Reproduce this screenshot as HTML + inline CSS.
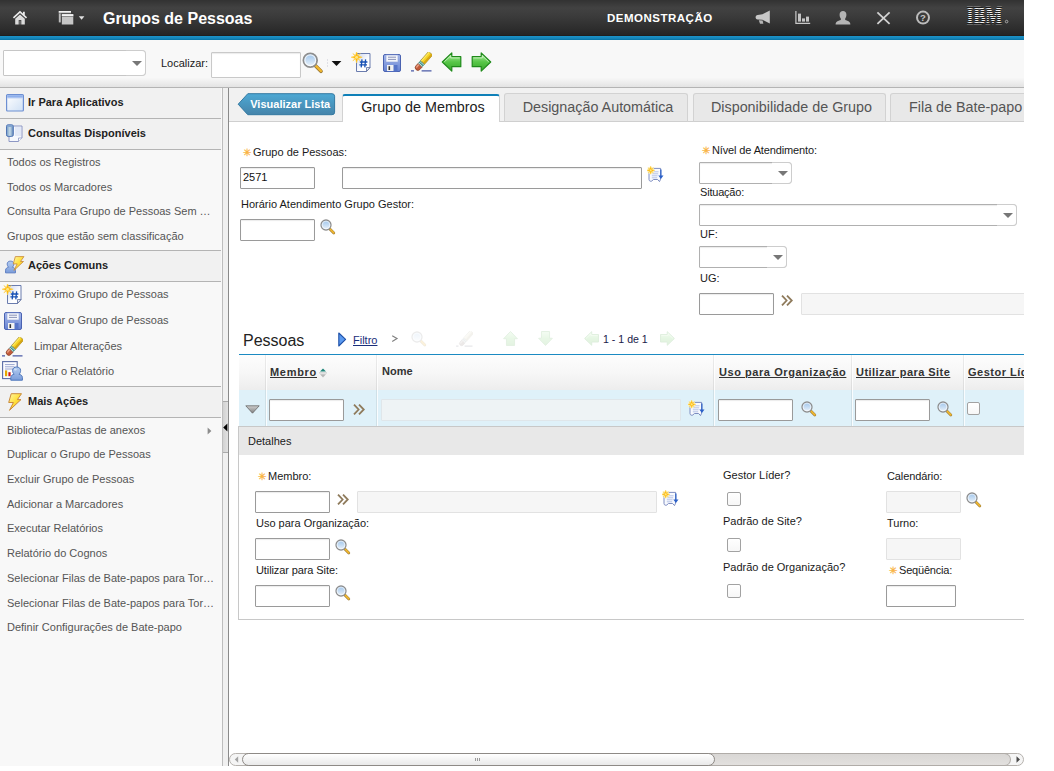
<!DOCTYPE html>
<html lang="pt-BR">
<head>
<meta charset="utf-8">
<title>Grupos de Pessoas</title>
<style>
html,body{margin:0;padding:0;background:#fff;}
body{width:1054px;height:771px;overflow:hidden;position:relative;font-family:"Liberation Sans",Arial,sans-serif;font-size:11px;color:#222;}
#app{position:absolute;left:0;top:0;width:1024px;height:766px;overflow:hidden;background:#fff;}
.abs,.ic{position:absolute;}
svg{display:block;overflow:visible;}
#hdr{position:absolute;left:0;top:0;width:1024px;height:36px;background:linear-gradient(#323232 0,#424242 22%,#3b3b3b 45%,#2d2d2d 80%,#252525 96%,#1c1c1c 100%);}
#hdrline{position:absolute;left:0;top:36px;width:1024px;height:4px;background:linear-gradient(#1c93c9,#1585b9 60%,#0672a3);}
#title{position:absolute;left:103px;top:9px;font-size:16px;font-weight:bold;color:#fff;white-space:nowrap;line-height:20px;}
#demo{position:absolute;left:607px;top:11px;font-size:11.5px;font-weight:bold;color:#fff;line-height:14px;white-space:nowrap;letter-spacing:.5px;}
#tb{position:absolute;left:0;top:40px;width:1024px;height:47px;background:linear-gradient(#f8f8f8 0,#f8f8f8 80%,#e3e3e3 100%);border-bottom:1px solid #b4b4b4;}
.inp{position:absolute;box-sizing:border-box;border:1px solid #9a9a9a;background:#fff;height:22px;border-radius:1px;font-size:11px;line-height:18px;padding-left:2px;color:#111;box-shadow:inset 0 1px 1px rgba(0,0,0,.08);}
.ro{background:#f6f6f6;border-color:#e2e2e2;box-shadow:none;}
.sel{border-color:#b0b0b0;border-radius:1px 4px 4px 1px;}
.sel:before{content:"";position:absolute;right:-1px;top:-1px;bottom:-1px;width:19px;border:1px solid #cdcdcd;border-left:none;border-radius:0 4px 4px 0;background:#fff;}
.sel:after{content:"";position:absolute;right:3px;top:8px;border-left:5px solid transparent;border-right:5px solid transparent;border-top:5px solid #777;}
.sel.tbs{border-color:#c6c6c6;border-radius:1px 4px 4px 1px;box-shadow:none;}
.sel.tbs:after{right:3px;top:10px;border-left-width:5px;border-right-width:5px;border-top-width:5.5px;}
.lbl{position:absolute;white-space:nowrap;font-size:11px;line-height:13px;color:#1a1a1a;}
.req{color:#f9b548;font-size:10px;display:inline-block;width:10px;font-weight:bold;}
.cb{position:absolute;box-sizing:border-box;width:14px;height:14px;border:1px solid #a2a2a2;border-radius:2px;background:linear-gradient(#fff,#f7f7f7);}
#nav{position:absolute;left:0;top:87px;width:222px;height:679px;background:#f8f8f8;border-top:1px solid #b4b4b4;box-sizing:border-box;}
.nh{position:absolute;left:0;width:221px;box-sizing:border-box;border-bottom:1px solid #b4b4b4;background:#f1f1f1;font-weight:bold;font-size:11px;color:#222;padding-left:28px;white-space:nowrap;}
.ni{position:absolute;left:7px;font-size:11px;color:#555;white-space:nowrap;line-height:14px;}
#split{position:absolute;left:222px;top:88px;width:7px;height:678px;background:#f0f0f0;border-left:1px solid #bdbdbd;border-right:1px solid #8a8a8a;box-sizing:border-box;}
#splith{position:absolute;left:223px;top:401px;width:5px;height:52px;box-sizing:border-box;background:linear-gradient(90deg,#d2d2d2,#e2e2e2);border-top:1px solid #aaa;border-bottom:1px solid #aaa;}
#tabbar{position:absolute;left:229px;top:87px;width:795px;height:35px;background:#f1f1f1;border-bottom:1px solid #cfcfcf;border-top:1px solid #b4b4b4;box-sizing:border-box;}
.tab{position:absolute;top:93px;height:29px;box-sizing:border-box;border:1px solid #d2d2d2;border-bottom:1px solid #cfcfcf;background:#e8e8e8;font-size:14.35px;color:#555;line-height:26px;text-align:center;padding-left:4px;white-space:nowrap;border-radius:3px 3px 0 0;}
.tab.on{top:94px;height:28px;background:#fff;border-top:2px solid #0f80b8;border-bottom:none;color:#222;line-height:23px;}
.th{position:absolute;font-weight:bold;font-size:11px;color:#333;white-space:nowrap;line-height:13px;letter-spacing:.5px;}
.th.u{text-decoration:underline;}
.vsep{position:absolute;top:355px;width:1px;height:71px;background:rgba(0,0,0,.07);box-shadow:1px 0 0 rgba(255,255,255,.8);}
</style>
</head>
<body>
<div id="app">
<svg width="0" height="0" style="position:absolute">
<defs>
<linearGradient id="gLens" x1="0" y1="0" x2="0" y2="1"><stop offset="0" stop-color="#9cc3ea"/><stop offset="1" stop-color="#eef5fc"/></linearGradient>
<linearGradient id="gGreen" x1="0" y1="0" x2="0" y2="1"><stop offset="0" stop-color="#b4eea8"/><stop offset=".5" stop-color="#58c648"/><stop offset="1" stop-color="#36a62a"/></linearGradient>
<linearGradient id="gWin" x1="0" y1="0" x2="1" y2="1"><stop offset="0" stop-color="#ffffff"/><stop offset="1" stop-color="#cfe0f5"/></linearGradient>
<linearGradient id="gSave" x1="0" y1="0" x2="0" y2="1"><stop offset="0" stop-color="#a6b9ec"/><stop offset="1" stop-color="#6783d2"/></linearGradient>
<linearGradient id="gBolt" x1="0" y1="0" x2="1" y2="1"><stop offset="0" stop-color="#fff7a8"/><stop offset=".5" stop-color="#ffdf3a"/><stop offset="1" stop-color="#f0b21c"/></linearGradient>
<linearGradient id="gPers" x1="0" y1="0" x2="0" y2="1"><stop offset="0" stop-color="#b4ccf0"/><stop offset="1" stop-color="#7a9cda"/></linearGradient>
<linearGradient id="gPage" x1="0" y1="0" x2="1" y2="1"><stop offset="0" stop-color="#c9d4ee"/><stop offset=".6" stop-color="#ffffff"/></linearGradient>
<linearGradient id="gCyl" x1="0" y1="0" x2="1" y2="0"><stop offset="0" stop-color="#6f97c4"/><stop offset=".5" stop-color="#c6dbe8"/><stop offset="1" stop-color="#5f86b8"/></linearGradient>

<symbol id="i-mag" viewBox="0 0 16 16">
<line x1="9.8" y1="10" x2="13.8" y2="14" stroke="#9a7a38" stroke-width="2.7" stroke-linecap="round"/>
<line x1="10" y1="10" x2="13.8" y2="13.8" stroke="#f3b92e" stroke-width="1.7" stroke-linecap="round"/>
<circle cx="6" cy="6" r="5" fill="url(#gLens)" stroke="#8e8e8e" stroke-width="1.3"/>
<circle cx="6" cy="6" r="3.9" fill="none" stroke="#fff" stroke-opacity=".75" stroke-width=".8"/>
</symbol>

<symbol id="i-chev" viewBox="0 0 12 11">
<path d="M1 .6 L5.6 5.5 L1 10.4 M6 .6 L10.8 5.5 L6 10.4" fill="none" stroke="#8f7b5c" stroke-width="1.8"/>
</symbol>

<symbol id="i-star" viewBox="-5 -5 10 10">
<path d="M0-5 L1-1.4 L3.2-3.2 L1.4-1 L5 0 L1.4 1 L3.2 3.2 L1 1.4 L0 5 L-1 1.4 L-3.2 3.2 L-1.4 1 L-5 0 L-1.4-1 L-3.2-3.2 L-1-1.4Z" fill="#ffb400" stroke="#ffd34d" stroke-width=".5"/>
<circle r="1.3" fill="#ffe680"/>
</symbol>

<symbol id="i-detail" viewBox="0 0 17 16">
<path d="M2 2.4 H13.6 V13.2 L12.5 15.6 L10.6 13.5 H6.4 Q4.8 15.8 3.2 15.2 Q2 14.8 2 13.4Z" fill="#f8fafe" stroke="#7081ba" stroke-width=".9" stroke-linejoin="round"/>
<path d="M4.8 5.8H11.6M4.8 7.8H11.2M4.8 9.8H10.6M4.8 11.8H10.2" stroke="#b6c2e6" stroke-width="1"/>
<path d="M13.9 3.6 V10.6" stroke="#2b60c8" stroke-width="1.2"/>
<path d="M11.3 9.5 H16.5 L13.9 12.9Z" fill="#2b60c8"/>
<circle cx="3.7" cy="4.3" r="3.6" fill="#fff6c4" opacity=".8"/>
<use href="#i-star" x="-.5" y="0.1" width="8.4" height="8.4"/>
</symbol>

<symbol id="i-new" viewBox="0 0 20 20">
<path d="M5.5 1.5 H19 V15.5 L15.5 19.5 H5.5Z" fill="url(#gPage)" stroke="#6a7cae" stroke-width="1"/>
<path d="M19 15.5 H15.5 V19.5Z" fill="#eef1f8" stroke="#5a6c9c" stroke-width=".8"/>
<path d="M11 7.4 L10.2 15.4 M14.6 7.4 L13.8 15.4 M8.8 10 H16.4 M8.4 12.9 H16" stroke="#1650b4" stroke-width="1.3" fill="none"/>
<use href="#i-star" x="-.2" y="-.6" width="11.6" height="11.6"/>
</symbol>

<symbol id="i-save" viewBox="0 0 18 18">
<rect x=".5" y=".5" width="17" height="17" rx="1.5" fill="url(#gSave)" stroke="#4a62b0"/>
<rect x="3" y="1" width="12" height="7" fill="#f4f6fb" stroke="#8ea0d8" stroke-width=".6"/>
<path d="M5 3.2H13M5 5.4H13" stroke="#8a93b8" stroke-width="1"/>
<rect x="4" y="11" width="10.5" height="6.5" fill="#5674c8"/>
<rect x="4" y="11" width="6.5" height="6" fill="#f2f2f2"/>
<rect x="5.5" y="12.2" width="1.6" height="3.8" fill="#333"/>
</symbol>

<symbol id="i-erase" viewBox="0 0 21 20">
<g transform="translate(5.2 17.6) rotate(-48.5)">
<path d="M6 -2.7 H2.6 A2.7 2.7 0 0 0 2.6 2.7 H6Z" fill="#c25a3a" stroke="#7e3a22" stroke-width=".6"/>
<path d="M5.6 -2.1 H2.8 A2 2 0 0 0 1.2 -.6 H5.6Z" fill="#eaa284"/>
<rect x="6" y="-2.7" width="3.8" height="5.4" fill="#e4efea" stroke="#4e7e78" stroke-width=".5"/>
<rect x="7" y="-2.7" width="1.1" height="5.4" fill="#2c8c82"/>
<rect x="8.7" y="-2.7" width=".7" height="5.4" fill="#2c8c82"/>
<rect x="9.8" y="-2.7" width="12" height="5.4" fill="#f6d424" stroke="#8a7420" stroke-width=".6"/>
<rect x="9.8" y=".6" width="12" height="2.1" fill="#d6a616"/>
<rect x="9.8" y="-2.3" width="12" height="1.1" fill="#fbe96a"/>
</g>
<path d="M0 18.9 H3 M10.6 18.9 H20.5" stroke="#4a5aa6" stroke-width="1.4"/>
</symbol>

<symbol id="i-left" viewBox="0 0 20 20">
<path d="M.8 10 L10.3 .9 V4.7 H19.3 V14.7 H10.3 V19.1Z" fill="url(#gGreen)" stroke="#1f8a1a" stroke-width="1.2" stroke-linejoin="round"/>
<path d="M2.8 9.8 L9.2 3.8 V5.9 H18.2" fill="none" stroke="#d4f6cc" stroke-opacity=".8" stroke-width="1"/>
</symbol>
<symbol id="i-right" viewBox="0 0 20 20">
<path d="M19.2 10 L9.7 .9 V4.7 H.7 V14.7 H9.7 V19.1Z" fill="url(#gGreen)" stroke="#1f8a1a" stroke-width="1.2" stroke-linejoin="round"/>
<path d="M1.8 5.9 H10.8 V3.8 L17.2 9.8" fill="none" stroke="#d4f6cc" stroke-opacity=".8" stroke-width="1"/>
</symbol>

<symbol id="i-win" viewBox="0 0 18 18">
<rect x=".6" y=".6" width="16.8" height="16.4" rx="1" fill="url(#gWin)" stroke="#6d8fd2" stroke-width="1.2"/>
<rect x="1.2" y="1.2" width="15.6" height="2.6" fill="#8fb0ec"/>
<path d="M1.2 4.2H16.8" stroke="#c5d6f4" stroke-width=".8"/>
</symbol>

<symbol id="i-query" viewBox="0 0 17 19">
<path d="M4 2 H16 V14 L12.5 17.5 H3 V12" fill="#f6f8fd" stroke="#8d97c4" stroke-width="1"/>
<path d="M16 14 H12.5 V17.5" fill="#fff" stroke="#8d97c4" stroke-width=".8"/>
<path d="M9 3 H15 V12 H9Z" fill="#dfe5f5" opacity=".8"/>
<rect x=".5" y=".8" width="6.8" height="11.6" rx="1.6" fill="url(#gCyl)" stroke="#4f74b4" stroke-width="1"/>
<ellipse cx="3.9" cy="2" rx="3" ry="1" fill="#7fa2d0"/>
</symbol>

<symbol id="i-bolt" viewBox="0 0 14 18">
<path d="M3.2 .7 H13.5 L9.4 6.6 H13 L1.5 17.3 L5.4 9.5 H.7Z" fill="url(#gBolt)" stroke="#c98a3c" stroke-width="1" stroke-linejoin="round"/>
</symbol>

<symbol id="i-person" viewBox="0 0 12 14">
<path d="M.6 13.4 V10.6 C.6 8.4 2.4 7.6 4 7.2 C2.8 6.2 2.4 5 2.4 3.6 C2.4 1.6 4 .6 6 .6 C8 .6 9.6 1.6 9.6 3.6 C9.6 5 9.2 6.2 8 7.2 C9.6 7.6 11.4 8.4 11.4 10.6 V13.4Z" fill="url(#gPers)" stroke="#5678c0" stroke-width="1" stroke-linejoin="round"/>
</symbol>

<symbol id="i-report" viewBox="0 0 21 20">
<rect x=".6" y=".6" width="14.6" height="17" fill="#fbfbfe" stroke="#5a6ca6" stroke-width="1.1"/>
<path d="M3 3.6H12.6M3 5.8H12.6M3 8H12.6" stroke="#9aa6d0" stroke-width="1"/>
<rect x="3" y="9.4" width="2.2" height="5.8" fill="#e6a800"/>
<rect x="6.4" y="11.2" width="2.2" height="4" fill="#d01818"/>
<path d="M8.8 19.2 V16.6 C8.8 14.4 10.6 13.6 12.2 13.2 C11 12.2 10.6 11 10.6 9.4 C10.6 7.2 12.4 6 14.6 6 C16.8 6 18.6 7.2 18.6 9.4 C18.6 11 18.2 12.2 17 13.2 C18.6 13.6 20.4 14.4 20.4 16.6 V19.2Z" fill="url(#gPers)" stroke="#4f78bc" stroke-width="1" stroke-linejoin="round"/>
<ellipse cx="13.4" cy="8.6" rx="1.4" ry="1" fill="#dbe8fa" opacity=".8"/>
</symbol>
</defs>
</svg>
<div id="hdr"></div>
<div id="hdrline"></div>
<!-- home -->
<svg class="ic" style="left:12px;top:10px" width="16" height="15" viewBox="0 0 16 15">
<path d="M8 .7 L.9 7.3 L2 8.4 L8 2.9 L14 8.4 L15.1 7.3 L12.8 5.2 V1.8 H11 V3.5Z" fill="#ebebeb"/>
<path d="M3.2 8.7 L8 4.4 L12.8 8.7 V14.5 H9.3 V10 H6.7 V14.5 H3.2Z" fill="#dcdcdc"/>
<rect x="7.5" y="10.6" width="1" height="3.9" fill="#9a9a9a"/>
</svg>
<!-- window stack -->
<svg class="ic" style="left:58px;top:10px" width="28" height="16" viewBox="0 0 28 16">
<rect x=".8" y="1" width="12.2" height="11.4" fill="#bdbdbd"/>
<rect x=".8" y="1" width="12.2" height="1.8" fill="#f2f2f2"/>
<rect x=".8" y="2.8" width="12.2" height=".6" fill="#555"/>
<rect x="2.8" y="3.4" width="13.4" height="12" fill="#303030"/>
<rect x="3.8" y="4.2" width="11.5" height="10.3" fill="#c6c6c6"/>
<rect x="3.8" y="4.2" width="11.5" height="1.8" fill="#f4f4f4"/>
<rect x="3.8" y="6" width="11.5" height=".6" fill="#666"/>
<path d="M20.8 6.3 H26.4 L23.6 9.8Z" fill="#e0e0e0"/>
</svg>
<div id="title">Grupos de Pessoas</div>
<div id="demo">DEMONSTRAÇÃO</div>
<!-- megaphone -->
<svg class="ic" style="left:754px;top:10px" width="17" height="16" viewBox="0 0 17 16">
<path d="M15.8 .4 V13.4 L8.4 9.8 L3.6 9.4 C2.2 9.2 1.6 8.2 1.6 7.2 C1.6 6.2 2.4 5.2 3.6 5 L8.4 4.2Z" fill="#c8c8c8"/>
<path d="M4.8 10.2 L6 13.8 H9.4 L8.6 10.6Z" fill="#b4b4b4"/>
</svg>
<!-- chart -->
<svg class="ic" style="left:795px;top:10px" width="16" height="15" viewBox="0 0 16 15">
<path d="M.9 1 V13.4 H15.2" fill="none" stroke="#c8c8c8" stroke-width="1.2"/>
<rect x="3" y="3.6" width="3" height="8" fill="#c4c4c4"/>
<rect x="7" y="8.4" width="3" height="3.2" fill="#c4c4c4"/>
<rect x="11" y="6.6" width="3" height="5" fill="#c4c4c4"/>
</svg>
<!-- person -->
<svg class="ic" style="left:835px;top:10px" width="16" height="15" viewBox="0 0 16 15">
<path d="M.6 14.4 C.6 11.6 3 11 5.8 10 V8.4 C4.8 7.4 4.6 6 4.6 4.6 C4.6 2.4 6 1 8 1 C10 1 11.4 2.4 11.4 4.6 C11.4 6 11.2 7.4 10.2 8.4 V10 C13 11 15.4 11.6 15.4 14.4Z" fill="#b4b4b4"/>
</svg>
<!-- close X -->
<svg class="ic" style="left:876px;top:11px" width="15" height="14" viewBox="0 0 15 14">
<path d="M1.4 1.4 L13.6 12.8 M13.6 1.4 L1.4 12.8" stroke="#d2d2d2" stroke-width="1.8" fill="none"/>
</svg>
<!-- help -->
<svg class="ic" style="left:915px;top:10px" width="16" height="16" viewBox="0 0 16 16">
<circle cx="8" cy="7.6" r="6" fill="none" stroke="#bcbcbc" stroke-width="2"/>
<text x="8" y="11.2" font-family="Liberation Sans, sans-serif" font-size="9.5" font-weight="bold" fill="#c6c6c6" text-anchor="middle">?</text>
</svg>
<!-- IBM logo -->
<svg class="ic" style="left:964px;top:6px" width="48" height="20" viewBox="0 0 48 20">
<defs><pattern id="ibmStripes" x="0" y="2" width="4" height="2" patternUnits="userSpaceOnUse"><rect width="4" height="1.1" fill="#f2f2f2"/><rect y="1.05" width="4" height=".95" fill="#161616"/></pattern></defs>
<text x="2.6" y="18" font-family="Liberation Serif, serif" font-size="24.4" font-weight="bold" fill="url(#ibmStripes)" stroke="url(#ibmStripes)" stroke-width=".5" textLength="35.6" lengthAdjust="spacingAndGlyphs">IBM</text>
<circle cx="42.6" cy="15.6" r="1.3" fill="none" stroke="#cfcfcf" stroke-width=".7"/>
</svg>

<div id="tb"></div>
<div class="inp sel tbs" style="left:3px;top:50px;width:143px;height:26px;"></div>
<div class="lbl" style="left:161px;top:57px;font-size:11px">Localizar:</div>
<div class="inp" style="left:211px;top:52px;width:90px;height:26px;border-color:#c9c9c9;"></div>
<svg class="ic" style="left:302px;top:51.5px" width="22" height="22"><use href="#i-mag" width="22" height="22" /></svg>
<svg class="ic" style="left:326px;top:57px" width="16" height="12" viewBox="0 0 16 12">
<path d="M1.5 2.5v1M1.5 5.5v1M1.5 8.5v1" stroke="#c8c8d4" stroke-width="1"/>
<path d="M5.6 4 H15.4 L10.5 9Z" fill="#111"/>
</svg>
<svg class="ic" style="left:351px;top:52px" width="20" height="20"><use href="#i-new" width="20" height="20"/></svg>
<svg class="ic" style="left:383px;top:54px" width="18" height="18"><use href="#i-save" width="18" height="18"/></svg>
<svg class="ic" style="left:411px;top:52px" width="21" height="20"><use href="#i-erase" width="21" height="20"/></svg>
<svg class="ic" style="left:441px;top:52px" width="21" height="20"><use href="#i-left" width="21" height="20"/></svg>
<svg class="ic" style="left:471px;top:52px" width="21" height="20"><use href="#i-right" width="21" height="20"/></svg>
<div id="nav"></div>
<div class="nh" style="top:88px;height:31px;line-height:28px;">Ir Para Aplicativos</div>
<svg class="ic" style="left:6px;top:94px" width="18" height="18"><use href="#i-win" width="18" height="18"/></svg>
<div class="nh" style="top:119px;height:31px;line-height:28px;">Consultas Disponíveis</div>
<svg class="ic" style="left:6px;top:124px" width="17" height="19"><use href="#i-query" width="17" height="19"/></svg>
<div class="ni" style="top:155px">Todos os Registros</div>
<div class="ni" style="top:180px">Todos os Marcadores</div>
<div class="ni" style="top:204px">Consulta Para Grupo de Pessoas Sem …</div>
<div class="ni" style="top:229px">Grupos que estão sem classificação</div>
<div class="nh" style="top:250px;height:32px;line-height:28px;border-top:1px solid #b4b4b4;">Ações Comuns</div>
<svg class="ic" style="left:5px;top:260px" width="11" height="14"><use href="#i-person" width="11" height="14"/></svg>
<svg class="ic" style="left:12px;top:256px" width="13" height="15"><use href="#i-bolt" width="13" height="15" preserveAspectRatio="none"/></svg>
<svg class="ic" style="left:2px;top:284px" width="20" height="20"><use href="#i-new" width="20" height="20"/></svg>
<div class="ni" style="left:34px;top:287px">Próximo Grupo de Pessoas</div>
<svg class="ic" style="left:4px;top:312px" width="18" height="18"><use href="#i-save" width="18" height="18"/></svg>
<div class="ni" style="left:34px;top:313px">Salvar o Grupo de Pessoas</div>
<svg class="ic" style="left:2px;top:337px" width="21" height="20"><use href="#i-erase" width="21" height="20"/></svg>
<div class="ni" style="left:34px;top:339px">Limpar Alterações</div>
<svg class="ic" style="left:2px;top:361px" width="21" height="20"><use href="#i-report" width="21" height="20"/></svg>
<div class="ni" style="left:34px;top:364px">Criar o Relatório</div>
<div class="nh" style="top:386px;height:32px;line-height:28px;border-top:1px solid #b4b4b4;">Mais Ações</div>
<svg class="ic" style="left:8px;top:393px" width="14" height="18"><use href="#i-bolt" width="14" height="18"/></svg>
<div class="ni" style="top:423px">Biblioteca/Pastas de anexos</div>
<svg class="ic" style="left:207px;top:427px" width="5" height="8" viewBox="0 0 5 8"><path d="M.6 .6 L4.4 4 L.6 7.4Z" fill="#8c8c8c"/></svg>
<div class="ni" style="top:447px">Duplicar o Grupo de Pessoas</div>
<div class="ni" style="top:472px">Excluir Grupo de Pessoas</div>
<div class="ni" style="top:497px">Adicionar a Marcadores</div>
<div class="ni" style="top:521px">Executar Relatórios</div>
<div class="ni" style="top:546px">Relatório do Cognos</div>
<div class="ni" style="top:571px">Selecionar Filas de Bate-papos para Tor…</div>
<div class="ni" style="top:596px">Selecionar Filas de Bate-papos para Tor…</div>
<div class="ni" style="top:620px">Definir Configurações de Bate-papo</div>
<div id="split"></div><div id="splith"></div>
<svg class="ic" style="left:223px;top:423px" width="5" height="9" viewBox="0 0 5 9"><path d="M4.4 .4 L.2 4.5 L4.4 8.6Z" fill="#000"/></svg>
<div id="tabbar"></div>
<!-- Visualizar Lista button -->
<svg class="ic" style="left:237px;top:93px" width="99" height="23" viewBox="0 0 99 23">
<defs><linearGradient id="gBtn" x1="0" y1="0" x2="0" y2="1"><stop offset="0" stop-color="#4da8d4"/><stop offset="1" stop-color="#4584aa"/></linearGradient></defs>
<path d="M1.2 11.2 L10.8 .7 H95 Q97.6 .7 97.6 3.2 V19.2 Q97.6 21.7 95 21.7 H10.8Z" fill="url(#gBtn)" stroke="#3379a2" stroke-width="1"/>
<text x="13.2" y="15.1" font-family="Liberation Sans, sans-serif" font-size="11" font-weight="bold" fill="#fff" textLength="80">Visualizar Lista</text>
</svg>
<div class="tab on" style="left:342px;width:158px;">Grupo de Membros</div>
<div class="tab" style="left:504px;width:184px;">Designação Automática</div>
<div class="tab" style="left:693px;width:193px;">Disponibilidade de Grupo</div>
<div class="tab" style="left:890px;width:170px;text-align:left;padding-left:18px;">Fila de Bate-papo</div>

<!-- form left -->
<div class="lbl" style="left:243px;top:146px;"><span class="req">✳</span>Grupo de Pessoas:</div>
<div class="inp" style="left:240px;top:167px;width:75px;">2571</div>
<div class="inp" style="left:342px;top:167px;width:300px;"></div>
<svg class="ic" style="left:647px;top:166px" width="17" height="16"><use href="#i-detail" width="17" height="16"/></svg>
<div class="lbl" style="left:241px;top:198px;">Horário Atendimento Grupo Gestor:</div>
<div class="inp" style="left:240px;top:219px;width:75px;"></div>
<svg class="ic" style="left:320px;top:219px" width="16" height="16"><use href="#i-mag" width="16" height="16"/></svg>

<!-- form right -->
<div class="lbl" style="left:702px;top:144px;letter-spacing:-.13px"><span class="req">✳</span>Nível de Atendimento:</div>
<div class="inp sel" style="left:699px;top:162px;width:93px;"></div>
<div class="lbl" style="left:700px;top:186px;letter-spacing:-.2px">Situação:</div>
<div class="inp sel" style="left:699px;top:204px;width:318px;"></div>
<div class="lbl" style="left:700px;top:228px;">UF:</div>
<div class="inp sel" style="left:699px;top:246px;width:88px;"></div>
<div class="lbl" style="left:700px;top:272px;">UG:</div>
<div class="inp" style="left:699px;top:293px;width:75px;"></div>
<svg class="ic" style="left:781px;top:295px" width="12" height="11"><use href="#i-chev" width="12" height="11"/></svg>
<div class="inp ro" style="left:801px;top:293px;width:240px;"></div>

<!-- table -->
<div class="abs" style="left:243px;top:331px;font-size:16px;line-height:20px;color:#222;">Pessoas</div>
<svg class="ic" style="left:338px;top:332px" width="9" height="15" viewBox="0 0 9 15"><path d="M.8 1 L7.6 7.4 L.8 14Z" fill="#5b9af0" stroke="#1d4fa6" stroke-width="1.1" stroke-linejoin="round"/></svg>
<div class="abs" style="left:353px;top:334px;font-size:11px;line-height:13px;color:#1a2e7a;text-decoration:underline;">Filtro</div>
<svg class="ic" style="left:391px;top:335px" width="8" height="8" viewBox="0 0 8 8"><path d="M1.2 .8 L6 3.6 L1.2 6.4" fill="none" stroke="#808080" stroke-width="1.15"/></svg>
<svg class="ic" style="left:411px;top:331px;opacity:.17" width="16" height="16"><use href="#i-mag" width="16" height="16"/></svg>
<svg class="ic" style="left:456px;top:331px;opacity:.14;filter:grayscale(.8)" width="17" height="16"><use href="#i-erase" width="17" height="16"/></svg>
<svg class="ic" style="left:503px;top:331px;opacity:.13" width="15" height="15" viewBox="0 0 20 20"><path d="M10 .7 L.8 10.3 H4.6 V19.3 H15.4 V10.3 H19.2Z" fill="url(#gGreen)" stroke="#1f8a1a" stroke-width="1.2"/></svg>
<svg class="ic" style="left:538px;top:331px;opacity:.13" width="15" height="15" viewBox="0 0 20 20"><path d="M10 19.3 L.8 9.7 H4.6 V.7 H15.4 V9.7 H19.2Z" fill="url(#gGreen)" stroke="#1f8a1a" stroke-width="1.2"/></svg>
<svg class="ic" style="left:584px;top:331px;opacity:.15" width="15" height="15"><use href="#i-left" width="15" height="15"/></svg>
<div class="abs" style="left:603px;top:333px;font-size:10.6px;line-height:13px;color:#1a1a4a;white-space:nowrap;">1 - 1 de 1</div>
<svg class="ic" style="left:660px;top:331px;opacity:.15" width="15" height="15"><use href="#i-right" width="15" height="15"/></svg>

<div class="abs" style="left:239px;top:354px;width:790px;height:1px;background:#1b8ac2;"></div>
<div class="abs" style="left:239px;top:355px;width:790px;height:35px;background:linear-gradient(#fdfdfd,#f7f7f7 50%,#ededed);"></div>
<div class="abs" style="left:239px;top:390px;width:790px;height:36px;background:#dff1f9;"></div>
<div class="vsep" style="left:265px"></div>
<div class="vsep" style="left:376px"></div>
<div class="vsep" style="left:713px"></div>
<div class="vsep" style="left:851px"></div>
<div class="vsep" style="left:963px"></div>
<div class="th u" style="left:270px;top:366px;letter-spacing:.7px;">Membro</div>
<svg class="ic" style="left:319px;top:368px" width="8" height="10" viewBox="0 0 8 10"><path d="M4 .4 L7 3.6 H1Z" fill="#1d8478"/><path d="M0 4.9H8" stroke="#bbb" stroke-width=".8"/><path d="M4 9.6 L7 6.2 H1Z" fill="#b8b8b8"/></svg>
<div class="th" style="left:382px;top:365px;letter-spacing:0;">Nome</div>
<div class="th u" style="left:719px;top:366px;letter-spacing:.56px">Uso para Organização</div>
<div class="th u" style="left:856px;top:366px;letter-spacing:.45px;">Utilizar para Site</div>
<div class="th u" style="left:968px;top:366px;">Gestor Líder?</div>

<svg class="ic" style="left:245px;top:405px" width="15" height="9" viewBox="0 0 15 9"><defs><linearGradient id="gTri" x1="0" y1="0" x2="0" y2="1"><stop offset="0" stop-color="#cfcfcf"/><stop offset="1" stop-color="#808080"/></linearGradient></defs><path d="M.8 .8 H14.2 L7.5 8.2Z" fill="url(#gTri)" stroke="#666" stroke-width=".8"/></svg>
<div class="inp" style="left:269px;top:399px;width:75px;"></div>
<svg class="ic" style="left:353px;top:404px" width="12" height="11"><use href="#i-chev" width="12" height="11"/></svg>
<div class="inp ro" style="left:381px;top:399px;width:300px;background:#eef3f5;border-color:#dfe6ea;"></div>
<svg class="ic" style="left:688px;top:400px" width="17" height="16"><use href="#i-detail" width="17" height="16"/></svg>
<div class="inp" style="left:718px;top:399px;width:75px;"></div>
<svg class="ic" style="left:801px;top:401px" width="16" height="16"><use href="#i-mag" width="16" height="16"/></svg>
<div class="inp" style="left:855px;top:399px;width:75px;"></div>
<svg class="ic" style="left:937px;top:401px" width="16" height="16"><use href="#i-mag" width="16" height="16"/></svg>
<div class="cb" style="left:967px;top:402px;width:13px;height:13px;"></div>

<!-- details -->
<div class="abs" style="left:238px;top:426px;width:792px;height:194px;box-sizing:border-box;border:1px solid #c8c8c8;background:#fff;"></div>
<div class="abs" style="left:239px;top:427px;width:790px;height:28px;background:#e8e8e8;"></div>
<div class="lbl" style="left:248px;top:435px;">Detalhes</div>

<div class="lbl" style="left:258px;top:470px;"><span class="req">✳</span>Membro:</div>
<div class="inp" style="left:255px;top:491px;width:75px;"></div>
<svg class="ic" style="left:337px;top:494px" width="12" height="11"><use href="#i-chev" width="12" height="11"/></svg>
<div class="inp ro" style="left:357px;top:491px;width:300px;"></div>
<svg class="ic" style="left:662px;top:490px" width="17" height="16"><use href="#i-detail" width="17" height="16"/></svg>
<div class="lbl" style="left:256px;top:517px;">Uso para Organização:</div>
<div class="inp" style="left:255px;top:538px;width:75px;"></div>
<svg class="ic" style="left:335px;top:539px" width="16" height="16"><use href="#i-mag" width="16" height="16"/></svg>
<div class="lbl" style="left:256px;top:564px;letter-spacing:-.1px">Utilizar para Site:</div>
<div class="inp" style="left:255px;top:585px;width:75px;"></div>
<svg class="ic" style="left:335px;top:585px" width="16" height="16"><use href="#i-mag" width="16" height="16"/></svg>

<div class="lbl" style="left:723px;top:469px;">Gestor Líder?</div>
<div class="cb" style="left:727px;top:492px;"></div>
<div class="lbl" style="left:723px;top:515px;">Padrão de Site?</div>
<div class="cb" style="left:727px;top:538px;"></div>
<div class="lbl" style="left:723px;top:561px;">Padrão de Organização?</div>
<div class="cb" style="left:727px;top:584px;"></div>

<div class="lbl" style="left:887px;top:470px;letter-spacing:-.1px">Calendário:</div>
<div class="inp ro" style="left:886px;top:491px;width:75px;"></div>
<svg class="ic" style="left:966px;top:492px" width="16" height="16"><use href="#i-mag" width="16" height="16"/></svg>
<div class="lbl" style="left:887px;top:517px;">Turno:</div>
<div class="inp ro" style="left:886px;top:538px;width:75px;"></div>
<div class="lbl" style="left:889px;top:564px;letter-spacing:-.2px"><span class="req">✳</span>Seqüência:</div>
<div class="inp" style="left:886px;top:585px;width:70px;"></div>

<!-- scrollbar -->
<div class="abs" style="left:229px;top:753px;width:795px;height:13px;box-sizing:border-box;background:#f5f5f5;border:1px solid #b6b2ae;border-radius:6.5px;"></div>
<div class="abs" style="left:248px;top:753px;width:763px;height:13px;box-sizing:border-box;background:linear-gradient(#d9d7d5,#e2e0de);border:1px solid #b0aca8;border-left:none;border-radius:0 6.5px 6.5px 0;"></div>
<div class="abs" style="left:242px;top:753px;width:473px;height:13px;box-sizing:border-box;background:linear-gradient(#ffffff,#f6f6f6 40%,#e9e9e9);border:1px solid #8e8a86;border-radius:6.5px;"></div>
<svg class="ic" style="left:234px;top:756px" width="5" height="7" viewBox="0 0 5 7"><path d="M4.2 .3 L.8 3.5 L4.2 6.7Z" fill="#a4a4a4"/></svg>
<svg class="ic" style="left:1016px;top:756px" width="5" height="7" viewBox="0 0 5 7"><path d="M.5 .2 L4 3.5 L.5 6.8Z" fill="#4a4a4a"/></svg>
<div class="abs" style="left:475px;top:758px;width:1px;height:3px;background:#9a9a9a;box-shadow:2px 0 0 #9a9a9a,4px 0 0 #9a9a9a;"></div>
</div>
</body>
</html>
